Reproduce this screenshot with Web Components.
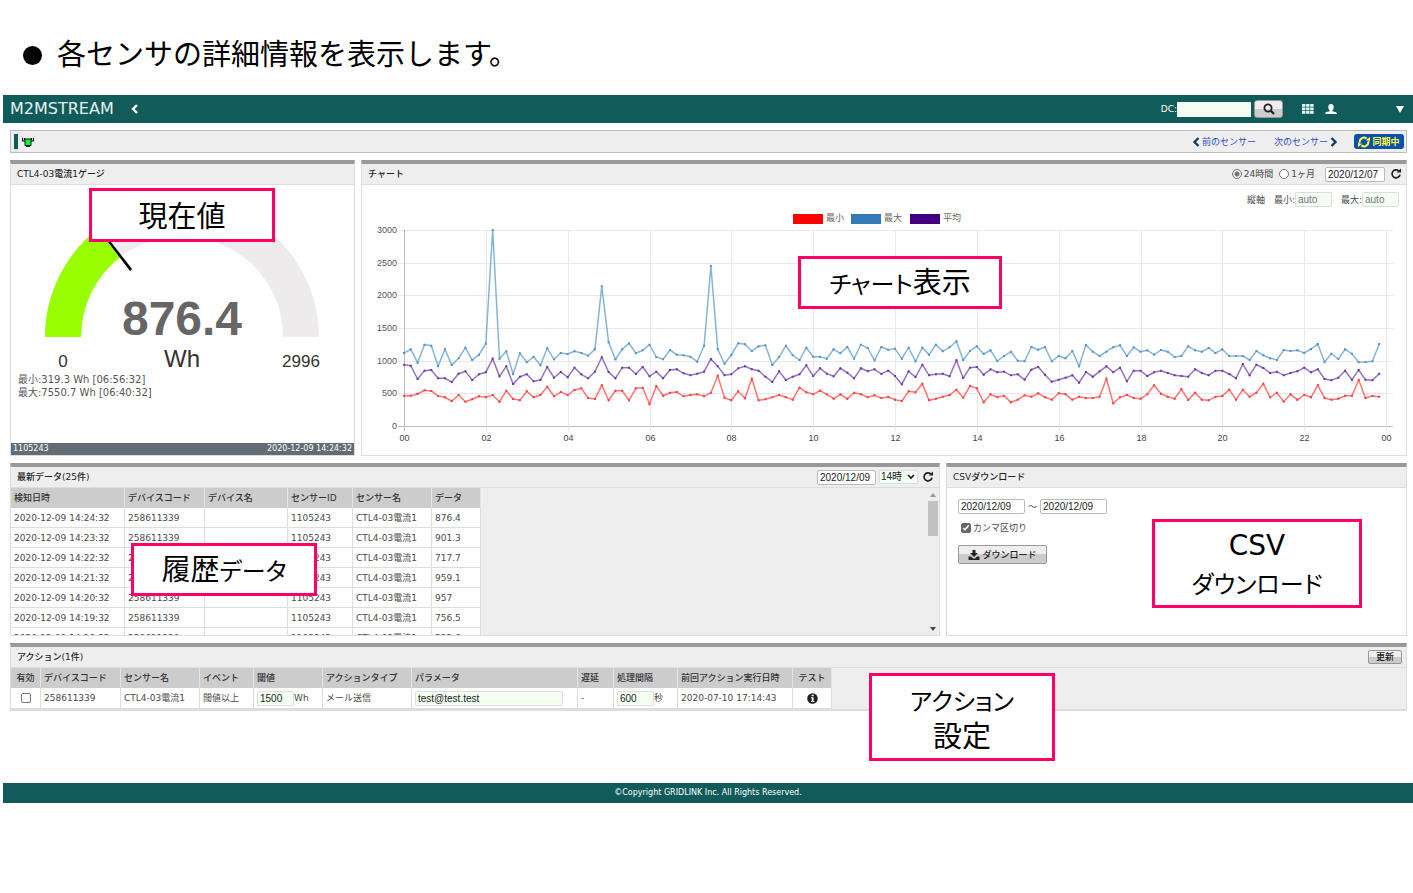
<!DOCTYPE html>
<html lang="ja">
<head>
<meta charset="utf-8">
<title>M2MSTREAM</title>
<style>
html, body { margin: 0; background: #fff; }
body { font: 9px/14px "DejaVu Sans", "Noto Sans CJK JP", sans-serif; color: #4a4a4a; }
</style>
</head>
<body>
<sensor-page></sensor-page>
<script>
const BASE = `
*, *::before { box-sizing: border-box; }
input, button, select { font: 10px/12px "Liberation Sans", "Noto Sans CJK JP", sans-serif; color: #222; margin: 0; border-radius: 2px; }
input[type=text] { height: 15px; padding: 0 2px; border: 1px solid #bbb; background: #fff; min-width: 0; }
input.soft, select.soft { background: #f2fff2; border: 1px solid #ddd; }
input::placeholder { color: #777; }
input[type=radio] { appearance: none; width: 10px; height: 10px; border: 1px solid #777; border-radius: 50%; background: #fff; }
input[type=radio]:checked { background: radial-gradient(circle, #777 0 2px, #eee 3px); }
input[type=checkbox] { appearance: none; width: 10px; height: 10px; border: 1px solid #777; background: #fff; }
label { display: flex; align-items: center; }
button { display: inline-flex; align-items: center; justify-content: center; padding: 0; border: 1px solid #999; background: linear-gradient(#eee 0 50%, #ccc 50% 100%); }
button.plain { border: 0; background: none; }
svg { display: block; flex: none; }
table { border-collapse: separate; border-spacing: 0; table-layout: fixed; background: #fff; }
th, td { height: 20px; padding: 0 0 0 3px; text-align: left; white-space: nowrap; border-right: 1px solid #ddd; border-bottom: 1px solid #ddd; }
th { background: #ccc; color: #333; border-color: #e4e4e4 #e4e4e4 #ccc; font-weight: 500; }
`;
const REFRESH = `<svg width="12" height="12" viewBox="0 0 12 12" fill="none"><path d="M8.6 2.8A4 4 0 1 0 10 6.6" stroke="#222" stroke-width="1.7"/><path d="M6.6 4.6H11V.4Z" fill="#222"/></svg>`;

function define(name, css, html, setup) {
  customElements.define(name, class extends HTMLElement {
    constructor() {
      super();
      this.attachShadow({ mode: 'open' }).innerHTML = `<style>${BASE}${css}</style>${html}`;
      if (setup) setup(this.shadowRoot, this);
    }
  });
}

define('page-lead', `
:host { display: block; padding: 37px 23px 28px; color: #000; }
h1 { display: flex; align-items: center; gap: 15px; margin: 0; font: 400 29px/30px "Noto Sans CJK JP", sans-serif; }
i { width: 19px; height: 19px; margin-top: 6px; border-radius: 50%; background: #000; }
`, `<h1><i></i><slot></slot></h1>`);

define('app-header', `
:host { display: flex; align-items: center; height: 28px; padding: 0 9px 0 7px; background: #115c5b; color: #fff; margin-left: 3px; }
.logo { font-size: 16px; line-height: 24px; color: #e6f0ee; }
.back { margin-left: 16px; }
.tools { display: flex; align-items: center; margin-left: auto; }
input[type=text] { width: 74px; border-color: #f2fff2; border-radius: 0; }
.search { width: 29px; height: 18px; margin: 0 19px 0 3px; border-radius: 3px; }
.user { margin: 0 59px 0 11px; }
`, `<span class="logo">M2MSTREAM</span>
<button class="plain back" aria-label="戻る"><svg width="9" height="10" viewBox="0 0 9 10"><path d="M7 1 3 5l4 4" fill="none" stroke="#fff" stroke-width="2.4"/></svg></button>
<div class="tools">
<label>DC:<input class="soft" type="text"></label>
<button class="search" aria-label="検索"><svg width="12" height="12" viewBox="0 0 12 12" fill="none" stroke="#222"><circle cx="5" cy="5" r="3.6" stroke-width="1.8"/><path d="m7.6 7.6 3.4 3.4" stroke-width="2.2"/></svg></button>
<svg width="12" height="10" viewBox="0 0 12 10" fill="#e8fff8"><path d="M0 0h3.400v2.800H0zM4.100 0h3.400v2.800H4.100zM8.200 0h3.400v2.800H8.200zM0 3.500h3.400v2.800H0zM4.100 3.500h3.400v2.800H4.100zM8.200 3.500h3.400v2.800H8.200zM0 7h3.400v2.800H0zM4.100 7h3.400v2.800H4.100zM8.200 7h3.400v2.800H8.200z"/></svg>
<svg class="user" width="12" height="11" viewBox="0 0 12 11" fill="#fff"><path d="M6 0c1.800 0 2.700 1.200 2.700 2.900S8 5.800 7.400 6.300v1L11 8.200c.6.3 1 .9 1 1.800H0c0-.9.4-1.500 1-1.800l3.600-.9v-1C4 5.800 3.300 4.600 3.300 2.900S4.200 0 6 0Z"/></svg>
<button class="plain" aria-label="メニュー"><svg width="8" height="7" viewBox="0 0 8 7"><path d="M0 0h8L4 7Z" fill="#fff"/></svg></button>
</div>`);

define('sensor-bar', `
:host { display: flex; align-items: center; height: 23px; padding: 0 2px 0 3px; background: #eee; border: 1px solid #bbb; }
.mark { width: 4px; height: 15px; background: #115c5b; margin-right: 4px; }
nav { display: flex; align-items: center; gap: 18px; margin-left: auto; }
a { display: flex; align-items: center; gap: 2px; color: #2a4fc0; text-decoration: none; }
.sync { width: 50px; height: 15px; gap: 2px; margin-left: 16px; border: 0; border-radius: 3px; background: #0b50ae; color: #ff3; font: 700 9px/12px "Noto Sans CJK JP", sans-serif; }
`, `<i class="mark"></i>
<svg width="12" height="10" viewBox="0 0 12 10"><path d="M.5 1v3h2.500M11.500 1v3H9M2.500 1v2M9.500 1v2" fill="none" stroke="#111" stroke-width="1.200"/><path d="M3 2h6v6.500H3z" fill="#0f3" stroke="#111"/><path d="M4 9.300h4" stroke="#111"/></svg>
<nav><a href="#prev"><svg width="8" height="10" viewBox="0 0 8 10"><path d="M6.500 1 2.500 5l4 4" fill="none" stroke="#0d3d6a" stroke-width="2.400"/></svg>前のセンサー</a>
<a href="#next">次のセンサー<svg width="8" height="10" viewBox="0 0 8 10"><path d="m1.500 1 4 4-4 4" fill="none" stroke="#0d3d6a" stroke-width="2.400"/></svg></a></nav>
<button class="sync"><svg width="12" height="12" viewBox="0 0 12 12"><path d="M1.700 6.800A4.300 4.300 0 0 1 8.600 2.600M10.300 5.200A4.300 4.300 0 0 1 3.400 9.400" fill="none" stroke="#ff3" stroke-width="2"/><path d="M7.800 4.200 12 5V1Z M4.200 7.800 0 7v4Z" fill="#ff3"/></svg>同期中</button>`);

define('data-panel', `
:host { display: flex; flex-direction: column; position: relative; border: 1px solid #ddd; border-top: 4px solid #999; background: #fff; min-width: 0; }
header { display: flex; align-items: center; justify-content: space-between; height: 21px; padding: 0 4px 0 6px; background: #eee; border-bottom: 1px solid #ddd; }
h2 { margin: 0; font-size: 9px; line-height: 14px; font-weight: 500; color: #222; }
.tools { display: flex; align-items: center; }
.body { flex: 1; display: flex; flex-direction: column; min-height: 0; }
`, `<header><h2></h2><div class="tools"><slot name="tools"></slot></div></header><div class="body"><slot></slot></div><slot name="note"></slot>`,
(root, host) => { root.querySelector('h2').textContent = host.getAttribute('heading'); });

define('call-out', `
:host { position: absolute; box-sizing: border-box; display: flex; align-items: center; justify-content: center; padding-bottom: 2px; border: 3px solid #f06; background: #fff; color: #000; text-align: center; font: 400 29px/35px "Noto Sans CJK JP", sans-serif; font-feature-settings: "palt"; z-index: 2; }
::slotted(.kana) { font-size: 24px; }
::slotted(.latin) { font: 28px/35px "DejaVu Sans", sans-serif; }
`, `<span><slot></slot></span>`);

define('gauge-panel', `
:host { display: grid; }
.gauge { width: 100%; height: auto; }
p { margin: 0 7px; font-size: 10px; line-height: 13px; color: #555; }
.foot { display: flex; justify-content: space-between; margin-top: auto; padding: 0 2px; background: #626c74; color: #fff; font-size: 8px; line-height: 12px; }
call-out { left: 78px; top: 24px; width: 186px; height: 54px; }
`, `<data-panel heading="CTL4-03電流1ゲージ">
<svg class="gauge" viewBox="0 0 343 188" font-family="Liberation Sans, sans-serif" text-anchor="middle">
<path d="M34 152A137 137 0 0 1 308 152H272A101 101 0 0 0 70 152Z" fill="#edebeb"/>
<path d="M34 152A137 137 0 0 1 87.900 43.100L109.700 71.700A101 101 0 0 0 70 152Z" fill="#9f0"/>
<path d="M94 53 96 52 121 84 119 86Z" fill="#000"/>
<text x="171" y="150" font-size="48" font-weight="700" fill="#666">876.4</text>
<text x="171" y="182" font-size="24" fill="#333">Wh</text>
<text x="52" y="182" font-size="17" fill="#333">0</text>
<text x="290" y="182" font-size="17" fill="#333">2996</text>
</svg>
<p>最小:319.3 Wh [06:56:32]</p><p>最大:7550.7 Wh [06:40:32]</p>
<div class="foot"><span>1105243</span><span>2020-12-09 14:24:32</span></div>
<call-out slot="note">現在値</call-out>
</data-panel>`);

/* Samples every ten minutes, in raw counts: 711 is 0 Wh, 123 is 3000 Wh. */
const SERIES = {
  max: { color: '#5294c8', raw: [492,481,521,467,470,531,481,528,508,476,513,497,464,123,509,487,555,493,520,503,529,478,511,492,495,487,492,500,481,292,460,511,481,463,493,484,467,504,511,483,497,499,503,518,470,231,480,524,498,463,466,486,472,469,528,504,470,499,513,476,503,503,509,481,493,474,509,467,477,514,474,482,479,509,476,517,476,497,467,487,475,457,513,486,472,495,484,516,501,488,515,517,474,482,474,517,501,508,486,532,468,488,501,488,475,469,501,475,488,484,497,483,488,504,501,472,484,488,477,492,481,501,501,501,513,486,499,508,513,483,486,484,492,480,465,519,494,510,481,494,520,519,517,465] },
  avg: { color: '#6a38a5', raw: [527,530,570,545,543,568,568,579,554,547,573,556,550,509,562,532,585,563,556,577,573,534,566,549,565,536,556,568,548,505,549,568,536,536,555,534,562,548,568,543,541,553,559,554,548,510,532,559,556,538,532,541,545,563,579,547,573,563,556,529,561,538,554,562,538,551,568,538,547,541,555,545,561,586,547,564,527,559,556,554,562,514,567,536,534,557,541,550,548,559,556,572,542,534,557,578,572,566,559,581,549,563,547,532,550,536,577,545,545,561,550,545,552,559,561,563,541,552,559,545,545,555,568,525,559,527,537,552,548,559,552,547,536,550,541,570,574,566,545,572,543,572,574,554] },
  min: { color: '#ff3a3a', raw: [620,620,615,604,606,621,625,636,618,638,631,622,625,618,638,605,630,634,607,625,618,593,622,609,618,603,598,627,630,589,634,605,605,634,598,596,645,591,620,611,609,622,618,616,622,611,560,626,634,607,628,569,634,631,625,618,625,632,596,610,616,605,616,629,616,629,611,616,625,619,627,623,632,636,607,610,584,634,629,623,618,602,626,591,598,640,616,625,620,640,632,619,623,613,625,632,613,616,632,623,627,627,623,569,643,625,618,627,629,616,589,614,623,629,600,633,611,632,634,623,621,602,632,602,623,611,584,625,611,638,616,632,618,625,589,627,632,629,620,620,573,627,621,623] }
};

define('chart-panel', `
:host { display: grid; min-width: 0; }
.tools { display: flex; align-items: center; }
.tools label { gap: 2px; margin-right: 6px; }
.tools input[type=text] { width: 60px; margin: 0 5px 0 4px; }
.range { display: flex; justify-content: flex-end; align-items: center; padding: 7px 7px 1px 0; }
.range label { margin-left: 9px; }
.range input[type=text] { width: 37px; }
.chart { width: 100%; height: auto; }
call-out { left: 436px; top: 92px; width: 204px; height: 53px; }
`, `<data-panel heading="チャート">
<div class="tools" slot="tools"><label><input type="radio" name="span" checked>24時間</label><label><input type="radio" name="span">1ヶ月</label><input type="text" value="2020/12/07" aria-label="日付"><button class="plain" aria-label="更新">${REFRESH}</button></div>
<div class="range">縦軸<label>最小:<input class="soft" type="text" placeholder="auto"></label><label>最大:<input class="soft" type="text" placeholder="auto"></label></div>
<svg class="chart" viewBox="0 0 1044 247" font-family="Liberation Sans, Noto Sans CJK JP, sans-serif" font-size="9"></svg>
<call-out slot="note"><span class="kana">チャート</span>表示</call-out>
</data-panel>`, root => {
  const left = 42, top = 22, base = 218, step = 982 / 144;
  let s = '';
  for (let i = 0; i <= 6; i++) {
    const y = Math.round(base - (base - top) * i / 6) + 0.5;
    s += `<path d="M${left - 6} ${y}H1031" stroke="${i ? '#e8e8e8' : '#bbb'}"/><text x="${left - 7}" y="${y + 2}" text-anchor="end" fill="#555">${i * 500}</text>`;
  }
  for (let h = 0; h <= 24; h += 2) {
    const x = Math.round(left + h * 6 * step) + 0.5;
    s += `<path d="M${x} ${top}V${base + 5}" stroke="${h ? '#e8e8e8' : '#bbb'}"/><text x="${x}" y="233" text-anchor="middle" fill="#444">${String(h % 24).padStart(2, '0')}</text>`;
  }
  [['#f00', '最小', 431], ['#337ab7', '最大', 489], ['#400080', '平均', 548]].forEach(([c, t, x]) => {
    s += `<rect x="${x}" y="6" width="30" height="10" fill="${c}"/><text x="${x + 33}" y="13" fill="#666">${t}</text>`;
  });
  for (const { color, raw } of Object.values(SERIES)) {
    const pts = raw.map((r, i) => [(left + i * step).toFixed(1), (base - (711 - r) / 3).toFixed(1)]);
    s += `<polyline points="${pts.join(' ')}" fill="none" stroke="${color}" stroke-width="1.5" stroke-opacity=".7"/>`;
    s += `<path d="${pts.map(([x, y]) => `M${x - 1} ${y - 1}h2v2h-2z`).join('')}" fill="${color}"/>`;
  }
  root.querySelector('.chart').innerHTML = s;
});

define('history-panel', `
:host { display: grid; min-width: 0; }
.tools { display: flex; align-items: center; gap: 3px; }
.tools input { width: 59px; }
.tools select { width: 39px; height: 14px; padding: 0 1px; appearance: none; background: #f2fff2 url("data:image/svg+xml,%3Csvg xmlns='http://www.w3.org/2000/svg' viewBox='0 0 8 6'%3E%3Cpath d='m1 1 3 3 3-3' fill='none' stroke='%23111' stroke-width='1.6'/%3E%3C/svg%3E") no-repeat right 2px center / 8px 6px; }
.tools button { margin: 0 1px; }
.view { display: flex; justify-content: space-between; height: 147px; overflow: hidden; background: #eee; }
table { width: 470px; height: 0; }
.bar { display: flex; flex-direction: column; align-items: center; width: 12px; padding: 5px 0 4px; }
.bar i { width: 10px; height: 35px; margin: 4px 0 auto; background: #c1c1c1; }
call-out { left: 120px; top: 76px; width: 186px; height: 53px; }
`, `<data-panel heading="最新データ(25件)">
<div class="tools" slot="tools"><input type="text" value="2020/12/09" aria-label="日付"><select class="soft" aria-label="時刻"><option>14時</option></select><button class="plain" aria-label="更新">${REFRESH}</button></div>
<div class="view"><table><colgroup><col style="width:114px"><col style="width:80px"><col style="width:83px"><col style="width:65px"><col style="width:79px"><col style="width:49px"></colgroup>
<thead><tr><th>検知日時</th><th>デバイスコード</th><th>デバイス名</th><th>センサーID</th><th>センサー名</th><th>データ</th></tr></thead><tbody></tbody></table>
<div class="bar"><svg width="6" height="4" viewBox="0 0 6 4"><path d="M0 4h6L3 0Z" fill="#999"/></svg><i></i><svg width="6" height="4" viewBox="0 0 6 4"><path d="M0 0h6L3 4Z" fill="#444"/></svg></div></div>
<call-out slot="note">履歴<span class="kana">データ</span></call-out>
</data-panel>`, root => {
  const values = ['876.4', '901.3', '717.7', '959.1', '957', '756.5', '532.6'];
  root.querySelector('tbody').innerHTML = values.map((v, i) =>
    `<tr><td>2020-12-09 14:${24 - i}:32</td><td>258611339</td><td></td><td>1105243</td><td>CTL4-03電流1</td><td>${v}</td></tr>`).join('');
});

define('csv-panel', `
:host { display: grid; min-width: 0; }
form { display: flex; flex-direction: column; align-items: flex-start; padding: 11px; }
.dates { display: flex; align-items: center; gap: 3px; }
.dates input[type=text] { width: 67px; }
label { margin: 7px 0 10px 3px; gap: 2px; line-height: 14px; }
input[type=checkbox]:checked { border-color: #666; background: #666 url("data:image/svg+xml,%3Csvg xmlns='http://www.w3.org/2000/svg' viewBox='0 0 10 10'%3E%3Cpath d='m2 5 2 2 4-5' fill='none' stroke='%23fff' stroke-width='1.6'/%3E%3C/svg%3E") center / 9px 9px; }
button { width: 89px; height: 19px; gap: 2px; font: 500 9px/12px "Noto Sans CJK JP", sans-serif; }
call-out { left: 205px; top: 52px; width: 210px; height: 89px; }
`, `<data-panel heading="CSVダウンロード">
<form><div class="dates"><input type="text" value="2020/12/09" aria-label="開始日"><span>～</span><input type="text" value="2020/12/09" aria-label="終了日"></div>
<label><input type="checkbox" checked>カンマ区切り</label>
<button type="button"><svg width="12" height="10" viewBox="0 0 12 10" fill="#222"><path d="M4.500 0h3v3H10L6 7 2 3h2.500Z"/><path d="M.5 6.500h2.500l2 2h2l2-2h2.500V10H.5Z"/></svg>ダウンロード</button></form>
<call-out slot="note"><span class="latin">CSV</span><br><span class="kana">ダウンロード</span></call-out>
</data-panel>`);

define('action-panel', `
:host { display: grid; min-width: 0; }
.update { width: 34px; height: 14px; font: 500 9px/12px "Noto Sans CJK JP", sans-serif; }
.view { background: #eee; border-bottom: 1px solid #ddd; }
table { width: 821px; }
td { height: 21px; }
td label { gap: 0; }
td input[type=text] { width: 37px; }
td input.mail { width: 148px; }
.mid { padding: 0; text-align: center; }
.mid input, .mid svg { display: block; margin: 0 auto; }
call-out { left: 858px; top: 26px; width: 186px; height: 88px; }
`, `<data-panel heading="アクション(1件)">
<button class="update" slot="tools">更新</button>
<div class="view"><table><colgroup><col style="width:30px"><col style="width:80px"><col style="width:79px"><col style="width:54px"><col style="width:69px"><col style="width:89px"><col style="width:166px"><col style="width:36px"><col style="width:64px"><col style="width:115px"><col style="width:39px"></colgroup>
<thead><tr><th class="mid">有効</th><th>デバイスコード</th><th>センサー名</th><th>イベント</th><th>閾値</th><th>アクションタイプ</th><th>パラメータ</th><th>遅延</th><th>処理間隔</th><th>前回アクション実行日時</th><th class="mid">テスト</th></tr></thead>
<tbody><tr><td class="mid"><input type="checkbox" aria-label="有効"></td><td>258611339</td><td>CTL4-03電流1</td><td>閾値以上</td><td><label><input class="soft" type="text" value="1500">Wh</label></td><td>メール送信</td><td><input class="soft mail" type="text" value="test@test.test" aria-label="パラメータ"></td><td>-</td><td><label><input class="soft" type="text" value="600">秒</label></td><td>2020-07-10 17:14:43</td><td class="mid"><svg width="11" height="11" viewBox="0 0 11 11"><circle cx="5.500" cy="5.500" r="5.300" fill="#222"/><path d="M4.700 1.700h2v1.600h-2zM4 4.300h2.600v3.700h.8v1H4V8h.8V5.300H4z" fill="#fff"/></svg></td></tr></tbody></table></div>
<call-out slot="note"><span class="kana">アクション</span><br>設定</call-out>
</data-panel>`);

define('page-footer', `
:host { display: block; margin-left: 3px; background: #115c5b; color: #fff; text-align: center; font-size: 8px; line-height: 20px; }
`, `<slot></slot>`);

define('sensor-page', `
:host { display: block; }
main { display: flex; flex-direction: column; gap: 7px; padding: 7px 6px 72px 10px; }
.row { display: grid; gap: 6px; }
.top { grid-template-columns: minmax(0, 345fr) minmax(0, 1046fr); }
.mid { grid-template-columns: minmax(0, 930fr) minmax(0, 461fr); }
`, `<page-lead>各センサの詳細情報を表示します。</page-lead>
<app-header></app-header>
<main><sensor-bar></sensor-bar>
<div class="row top"><gauge-panel></gauge-panel><chart-panel></chart-panel></div>
<div class="row mid"><history-panel></history-panel><csv-panel></csv-panel></div>
<action-panel></action-panel></main>
<page-footer>©Copyright GRIDLINK Inc. All Rights Reserved.</page-footer>`);
</script>
</body>
</html>
